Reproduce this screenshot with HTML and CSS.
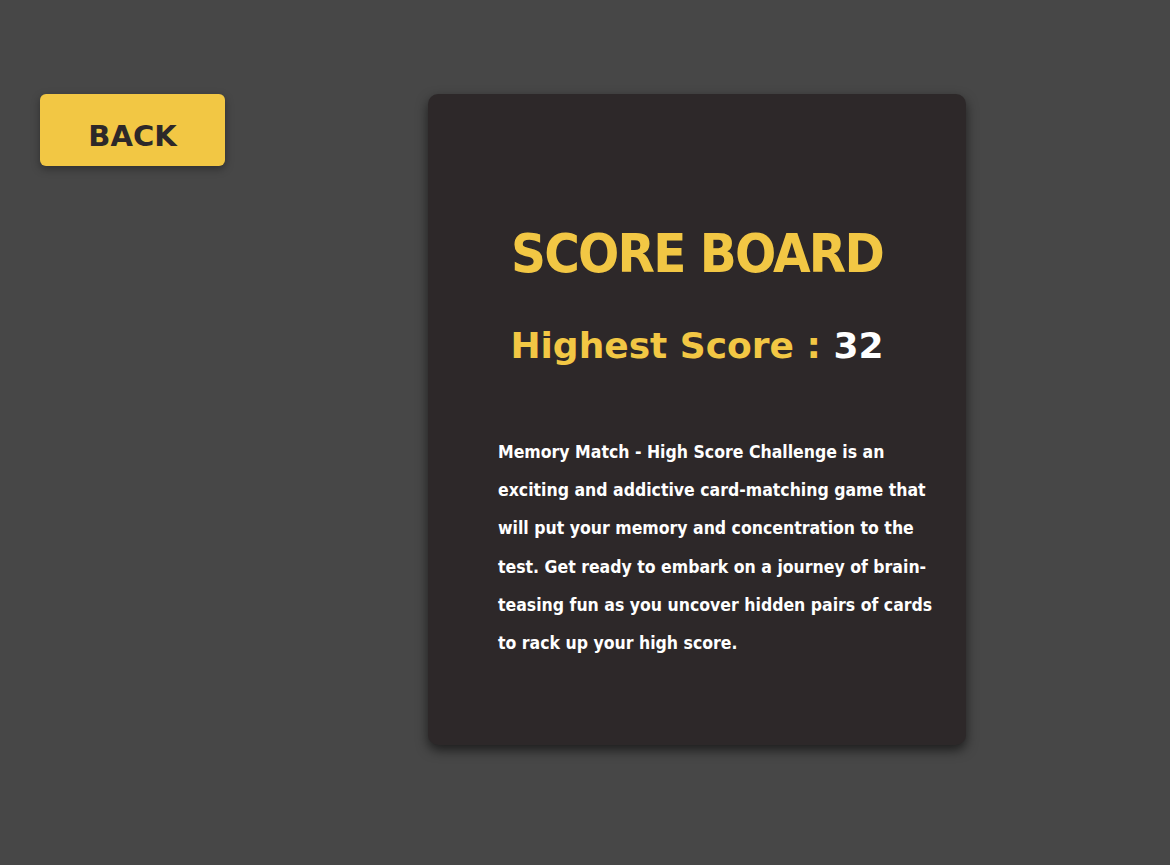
FILE: index.html
```html
<!DOCTYPE html>
<html lang="en">
<head>
<meta charset="utf-8">
<title>Score Board</title>
<link rel="stylesheet" href="styles.css">
</head>
<body>
<div class="page">
  <button class="back">BACK</button>
  <section class="card">
    <h1 class="title">SCORE BOARD</h1>
    <h2 class="score">Highest Score : <span class="num">32</span></h2>
    <p class="desc">Memory Match - High Score Challenge is an exciting and addictive card-matching game that will put your memory and concentration to the test. Get ready to embark on a journey of brain-teasing fun as you uncover hidden pairs of cards to rack up your high score.</p>
  </section>
</div>
</body>
</html>
```
FILE: styles.css
```css
html, body {
  margin: 0;
  height: 100%;
}
body {
  background: #474747;
  font-family: "DejaVu Sans Condensed", "DejaVu Sans", sans-serif;
}
.page {
  display: flex;
  align-items: flex-start;
  gap: 203px;
  padding: 94px 0 0 40px;
}
.back {
  width: 185px;
  height: 72px;
  background: #f2c744;
  color: #2d2829;
  border: none;
  border-radius: 6px;
  font-family: "DejaVu Sans", sans-serif;
  font-weight: bold;
  font-size: 29px;
  padding: 12px 0 0;
  box-shadow: 0 3px 8px rgba(0,0,0,0.35);
  flex: none;
}
.card {
  width: 538px;
  background: #2d2829;
  border-radius: 10px;
  box-shadow: 0 5px 12px rgba(0,0,0,0.6);
  padding: 133px 0 83px;
  box-sizing: border-box;
  display: flex;
  flex-direction: column;
  align-items: center;
}
.title {
  margin: 0;
  font-size: 54px;
  line-height: 1;
  font-weight: bold;
  letter-spacing: -1.8px;
  color: #f2c744;
}
.score {
  margin: 47px 0 0;
  font-family: "DejaVu Sans", sans-serif;
  font-size: 36px;
  line-height: 1;
  font-weight: bold;
  color: #f2c744;
}
.num {
  color: #ffffff;
}
.desc {
  align-self: flex-start;
  margin: 69px 0 0 70px;
  width: 442px;
  color: #ffffff;
  font-size: 17.5px;
  line-height: 38.2px;
  font-weight: bold;
}
```
